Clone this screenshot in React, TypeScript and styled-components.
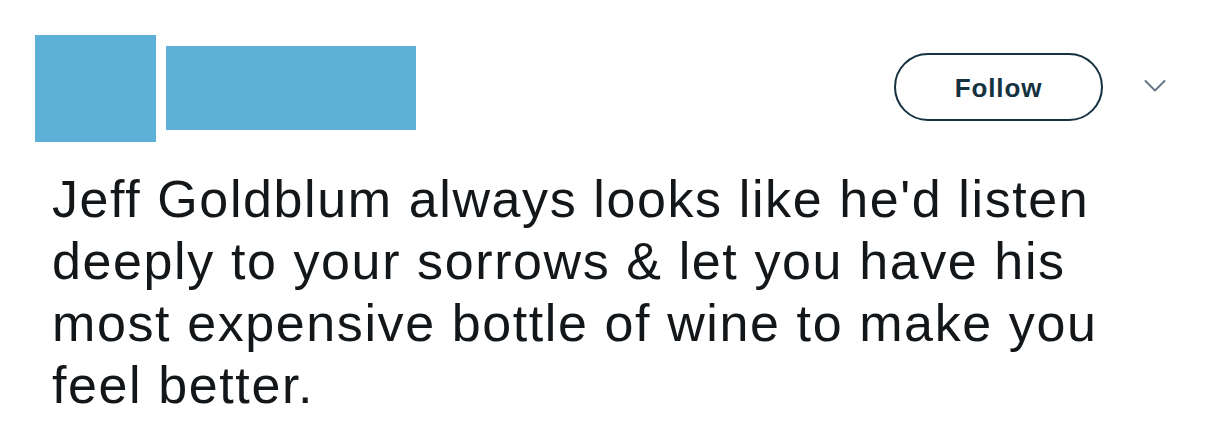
import React from "react";
import styled, { createGlobalStyle } from "styled-components";

const Global = createGlobalStyle`
  html, body { margin: 0; padding: 0; background: #ffffff; }
  body { font-family: "Liberation Sans", Arial, Helvetica, sans-serif; }
`;

const Card = styled.div`
  width: 1214px;
  height: 432px;
  box-sizing: border-box;
  padding: 35px 48px 0 35px;
  background: #fff;
  overflow: hidden;
`;

const Header = styled.div`
  display: flex;
  align-items: flex-start;
`;

const Avatar = styled.div`
  width: 121px;
  height: 107px;
  background: #5db1d9;
  flex-shrink: 0;
`;

const NameBlock = styled.div`
  margin-left: 10px;
  margin-top: 11px;
  width: 250px;
  height: 84px;
  background: #5db1d9;
`;

const Spacer = styled.div`
  flex: 1;
`;

const FollowButton = styled.button`
  margin-top: 18px;
  width: 209px;
  height: 68px;
  border: 2px solid #14323f;
  border-radius: 34px;
  background: #fff;
  color: #14323f;
  font-family: "Liberation Sans", Arial, sans-serif;
  font-weight: 700;
  font-size: 26px;
  letter-spacing: 0.9px;
  display: flex;
  align-items: center;
  justify-content: center;
  padding: 2px 0 0 0;
  box-sizing: border-box;
`;

const Caret = styled.div`
  margin-left: 41px;
  margin-top: 44px;
  width: 22px;
  height: 14px;
  display: flex;
`;

const Body = styled.p`
  margin: 26px 0 0 17px;
  font-family: "Liberation Sans", Arial, Helvetica, sans-serif;
  font-size: 52px;
  line-height: 62px;
  letter-spacing: 1.6px;
  color: #14171a;
  white-space: nowrap;
`;

export default function App() {
  return (
    <>
      <Global />
      <Card>
        <Header>
          <Avatar />
          <NameBlock />
          <Spacer />
          <FollowButton>Follow</FollowButton>
          <Caret>
            <svg width="22" height="14" viewBox="0 0 22 14" fill="none">
              <path d="M1.5 2 L11 11.5 L20.5 2" stroke="#657786" strokeWidth="2" strokeLinecap="round" strokeLinejoin="round" />
            </svg>
          </Caret>
        </Header>
        <Body>
          Jeff Goldblum always looks like he'd listen<br />
          deeply to your sorrows &amp; let you have his<br />
          most expensive bottle of wine to make you<br />
          feel better.
        </Body>
      </Card>
    </>
  );
}
